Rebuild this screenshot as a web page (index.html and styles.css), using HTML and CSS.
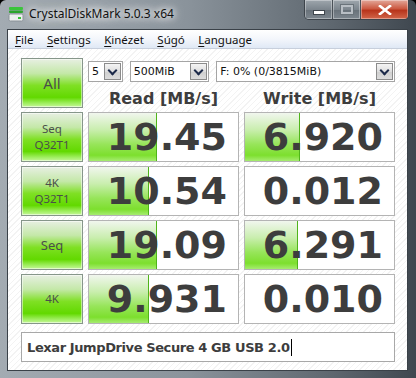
FILE: index.html
```html
<!DOCTYPE html>
<html lang="hu">
<head>
  <meta charset="UTF-8" />
  <meta name="viewport" content="width=device-width, initial-scale=1.0" />
  <title>CrystalDiskMark 5.0.3 x64</title>
  <link rel="stylesheet" href="styles.css">
</head>
<body>
  <div class="window">
    <!-- BARRA DE TÍTULO -->
    <div class="titlebar">
      <svg class="app-icon" width="16" height="16" viewBox="0 0 16 16">
        <rect x="1" y="1" width="14" height="3" rx="1" fill="#39c43a" />
        <rect x="1" y="4.5" width="14" height="2.5" rx="1" fill="#2aa52c" />
        <rect x="1" y="8" width="14" height="7" rx="1.5" fill="#eef0f0" stroke="#8a9298" stroke-width="1" />
        <rect x="10" y="11" width="3" height="2" fill="#38c23a" />
      </svg>
      <span class="title">CrystalDiskMark 5.0.3 x64</span>
      <div class="caption-buttons">
        <span class="cap-btn min"><i></i></span>
        <span class="cap-btn max"><i></i></span>
        <span class="cap-btn close">
          <svg width="14" height="10" viewBox="0 0 14 10">
            <path d="M2 1 L12 9 M12 1 L2 9" stroke="#fff" stroke-width="2.6" stroke-linecap="square" />
          </svg>
        </span>
      </div>
    </div>

    <div class="client">
      <!-- MENÚ -->
      <div class="menubar">
        <span><u>F</u>ile</span>
        <span><u>S</u>ettings</span>
        <span><u>K</u>inézet</span>
        <span><u>S</u>úgó</span>
        <span><u>L</u>anguage</span>
      </div>

      <div class="content">
        <div class="grid">
          <div class="test-btn all">All</div>
          <div class="top-panel">
            <div class="combos">
              <div class="combo c-count"><span>5</span><b class="drop"></b></div>
              <div class="combo c-size"><span>500MiB</span><b class="drop"></b></div>
              <div class="combo c-drive"><span>F: 0% (0/3815MiB)</span><b class="drop"></b></div>
            </div>
            <div class="headers">
              <span>Read [MB/s]</span>
              <span>Write [MB/s]</span>
            </div>
          </div>

          <div class="test-btn">Seq<br>Q32T1</div>
          <div class="cell"><span class="bar" style="width:67px"></span><span class="val">19.45</span></div>
          <div class="cell"><span class="bar" style="width:54px"></span><span class="val">6.920</span></div>

          <div class="test-btn">4K<br>Q32T1</div>
          <div class="cell"><span class="bar" style="width:59px"></span><span class="val">10.54</span></div>
          <div class="cell"><span class="val">0.012</span></div>

          <div class="test-btn big">Seq</div>
          <div class="cell"><span class="bar" style="width:67px"></span><span class="val">19.09</span></div>
          <div class="cell"><span class="bar" style="width:52px"></span><span class="val">6.291</span></div>

          <div class="test-btn">4K</div>
          <div class="cell"><span class="bar" style="width:59px"></span><span class="val">9.931</span></div>
          <div class="cell"><span class="val">0.010</span></div>
        </div>

        <div class="comment">Lexar JumpDrive Secure 4 GB USB 2.0<span class="caret"></span></div>
      </div>
    </div>
  </div>
</body>
</html>
```

FILE: styles.css
```css
:root {
  --texto: #3d3d3d;
  --borde-celda: #b4b4b4;
  --borde-btn: #86968a;
}

body {
  margin: 0;
  background: #000;
}

.window {
  width: 416px;
  height: 378px;
  box-sizing: border-box;
  padding: 0 8px 7px 7px;
  display: flex;
  flex-direction: column;
  background:
    linear-gradient(to right, #a3abb2 0%, #8a939b 45%, #5e676f 80%, #3f474f 100%);
  border-radius: 6px 6px 0 0;
  overflow: hidden;
}

/* barra de título */
.titlebar {
  height: 29px;
  flex-shrink: 0;
  display: flex;
  align-items: center;
  position: relative;
}

.app-icon {
  margin: 0 5px 0 1px;
  position: relative;
  top: -1px;
}

.title {
  font-family: "Noto Sans", sans-serif;
  font-size: 12px;
  color: #111;
  text-shadow: 0 0 6px #fff, 0 0 10px #fff, 0 0 14px rgba(255, 255, 255, 0.8);
  position: relative;
  top: -1px;
}

.caption-buttons {
  position: absolute;
  top: 0;
  right: -1px;
  display: flex;
  height: 19px;
  border: 1px solid #3d444b;
  border-top: none;
  border-radius: 0 0 5px 5px;
  overflow: hidden;
}

.cap-btn {
  display: flex;
  align-items: center;
  justify-content: center;
  height: 19px;
  box-shadow: inset 0 0 0 1px rgba(255, 255, 255, 0.35);
}

.cap-btn.min,
.cap-btn.max {
  width: 27px;
  background: linear-gradient(#9ea6ad, #7c858d 50%, #687179 51%, #7d868e);
  border-right: 1px solid #4a5158;
}

.cap-btn.min i {
  width: 10px;
  height: 3px;
  margin-top: 5px;
  background: #fff;
  border: 1px solid #3f464d;
}

.cap-btn.max i {
  width: 8px;
  height: 5px;
  border: 2px solid #b8bec4;
  outline: 1px solid #6a737a;
}

.cap-btn.close {
  width: 47px;
  background: linear-gradient(#e3a89a, #cc5a42 45%, #b8351c 55%, #d2664a);
}

/* área cliente */
.client {
  flex: 1;
  display: flex;
  flex-direction: column;
  border: 1px solid #3a4148;
  background: #fff;
}

.menubar {
  height: 18px;
  display: flex;
  align-items: center;
  padding-left: 7px;
  background: linear-gradient(#ffffff, #f3f6fb 50%, #dfe8f5);
  border-bottom: 1px solid #c7cfdc;
  font-family: "Noto Sans", sans-serif;
  font-size: 11.5px;
  color: #111;
}

.menubar span {
  margin-right: 13.5px;
}

.menubar u {
  text-decoration-thickness: 1px;
  text-underline-offset: 2px;
}

.content {
  flex: 1;
  padding: 9px 0 0 13px;
  background:
    repeating-linear-gradient(135deg, #ffffff 0 3px, #f3f3f3 3px 4px);
}

.grid {
  display: grid;
  grid-template-columns: 62px 151px 151px;
  grid-auto-rows: 50px;
  column-gap: 5px;
  row-gap: 4px;
}

.test-btn {
  box-sizing: border-box;
  border: 1px solid var(--borde-btn);
  box-shadow: inset 0 0 0 1px rgba(255, 255, 255, 0.5);
  background: linear-gradient(#e7efe2 0%, #c4e8a8 30%, #7fe024 55%, #62d900 80%, #9eee5e 92%, #c6f79a 100%);
  display: flex;
  align-items: center;
  justify-content: center;
  text-align: center;
  font-family: "Noto Sans", sans-serif;
  font-size: 11.5px;
  line-height: 16px;
  color: #4a4f4a;
}

.test-btn.all {
  font-size: 15px;
}

.test-btn.big {
  font-size: 13px;
}

.top-panel {
  grid-column: span 2;
  display: flex;
  flex-direction: column;
}

.combos {
  display: flex;
  gap: 7px;
  margin-top: 3px;
}

.combo {
  box-sizing: border-box;
  height: 21px;
  display: flex;
  align-items: center;
  border: 1px solid #a5a5a5;
  background: #fff;
  font-family: "DejaVu Sans", sans-serif;
  font-size: 11px;
  color: #111;
}

.combo span {
  flex: 1;
  padding-left: 3px;
}

.c-count { width: 35px; }
.c-size { width: 80px; }
.c-drive { width: 180px; }

.drop {
  width: 17px;
  height: 17px;
  margin-right: 1px;
  box-sizing: border-box;
  border: 1px solid #8b8b8b;
  background: linear-gradient(#f4f4f4, #dedede 50%, #cfcfcf 51%, #dcdcdc);
  position: relative;
}

.drop::after {
  content: "";
  position: absolute;
  left: 4px;
  top: 3px;
  width: 5px;
  height: 5px;
  border-right: 2px solid #1c2a4a;
  border-bottom: 2px solid #1c2a4a;
  transform: rotate(45deg);
}

.headers {
  display: flex;
  gap: 5px;
  margin-top: 7px;
}

.headers span {
  width: 151px;
  text-align: center;
  font-family: "DejaVu Sans", sans-serif;
  font-weight: bold;
  font-size: 16px;
  color: var(--texto);
}

.cell {
  position: relative;
  box-sizing: border-box;
  border: 1px solid var(--borde-celda);
  background: #fff;
  display: flex;
  align-items: center;
  justify-content: flex-end;
  padding-right: 11px;
}

.bar {
  position: absolute;
  top: 0;
  bottom: 0;
  left: 0;
  border-right: 1px solid #4fb41a;
  background: linear-gradient(#f1f6ee 0%, #c9eeae 35%, #97e55a 65%, #7ddf2e 88%, #a6ec70 100%);
}

.val {
  position: relative;
  font-family: "DejaVu Sans", sans-serif;
  font-weight: bold;
  font-size: 38px;
  line-height: 1;
  color: var(--texto);
}

.comment {
  box-sizing: border-box;
  width: 374px;
  height: 30px;
  margin-top: 8px;
  border: 1px solid #a8a8a8;
  background: #fff;
  display: flex;
  align-items: center;
  padding-left: 5px;
  font-family: "DejaVu Sans", sans-serif;
  font-weight: bold;
  font-size: 13px;
  letter-spacing: -0.4px;
  color: var(--texto);
}

.caret {
  width: 1px;
  height: 17px;
  margin-left: 1px;
  background: #000;
}
```
